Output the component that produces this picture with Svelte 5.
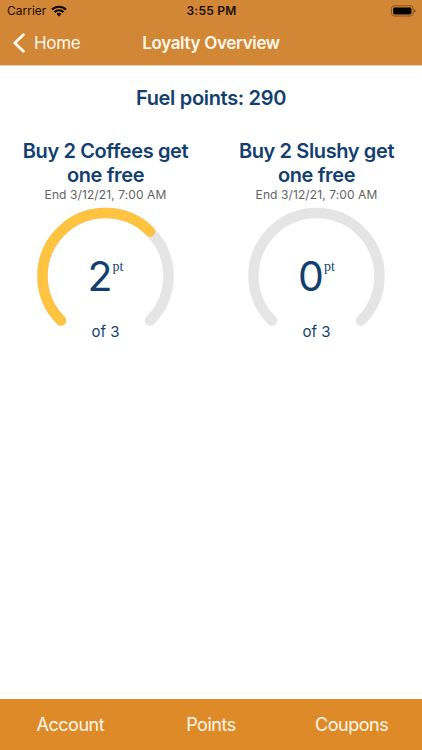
<script lang="ts">
  const fuelPoints = 290

  const offers = [
    { title: ['Buy 2 Coffees get', 'one free'], end: '3/12/21, 7:00 AM', points: 2, goal: 3 },
    { title: ['Buy 2 Slushy get', 'one free'], end: '3/12/21, 7:00 AM', points: 0, goal: 3 },
  ]

  const tabs = ['Account', 'Points', 'Coupons']

  // three quarter ring, starting bottom left
  const arc = 'M24.95 114.55 A63 63 0 1 1 114.05 114.55'
</script>

<div class="screen">
  <header>
    <div class="status">
      <div class="carrier">
        <span>Carrier</span>
        <svg width="16" height="12" viewBox="0 0 16 12">
          <path d="M1 4.6 A10 10 0 0 1 15 4.6" />
          <path d="M3.5 7.1 A6.4 6.4 0 0 1 12.5 7.1" />
          <path class="dot" d="M8 11.4 L5.6 9 A3.4 3.4 0 0 1 10.4 9 Z" />
        </svg>
      </div>
      <div class="time">3:55 PM</div>
      <svg class="battery" width="25" height="12" viewBox="0 0 25 12">
        <rect class="case" x="0.5" y="0.8" width="21.6" height="10.2" rx="2.6" />
        <rect x="2.2" y="2.4" width="18.2" height="7" rx="1.3" />
        <path class="cap" d="M23.2 4.2 Q24.6 4.7 24.6 5.9 Q24.6 7.1 23.2 7.6 Z" />
      </svg>
    </div>
    <nav>
      <button class="back">
        <svg width="14" height="20" viewBox="0 0 14 20">
          <path d="M11.4 1.8 L2.8 10 L11.4 18.2" />
        </svg>
        <span>Home</span>
      </button>
      <h1>Loyalty Overview</h1>
    </nav>
  </header>

  <main>
    <h2>Fuel points: {fuelPoints}</h2>

    <div class="offers">
      {#each offers as offer}
        <section>
          <h3>{offer.title[0]}<br />{offer.title[1]}</h3>
          <p class="end">End {offer.end}</p>
          <div class="gauge">
            <svg width="139" height="140" viewBox="0 0 139 140">
              <path class="track" d={arc} />
              {#if offer.points > 0}
                <path class="fill" d={arc} pathLength={offer.goal} stroke-dasharray="{offer.points} {offer.goal * 2}" />
              {/if}
            </svg>
            <div class="value">
              <span class="num">{offer.points}</span><span class="unit">pt</span>
            </div>
            <div class="goal">of {offer.goal}</div>
          </div>
        </section>
      {/each}
    </div>
  </main>

  <footer>
    {#each tabs as tab}
      <button>{tab}</button>
    {/each}
  </footer>
</div>

<style>
  :global(body) {
    background: #fff;
  }

  .screen {
    --navy: #123f70;

    font-family: Inter, 'Liberation Sans', sans-serif;
    height: 750px;
    display: flex;
    flex-direction: column;
    color: var(--navy);
    background: #fff;
  }

  h1, h2, h3, p {
    margin: 0;
  }

  button {
    border: none;
    background: none;
    padding: 0;
    font: inherit;
    color: #fff8ea;
    cursor: pointer;
  }

  header {
    height: 66px;
    background: #d18736;
    border-bottom: 1px solid #efcfa9;
    box-sizing: border-box;
  }

  .status {
    height: 21px;
    display: grid;
    grid-template-columns: 1fr auto 1fr;
    align-items: center;
    padding: 0 6px 0 7px;
    color: #1c0d02;
    font-size: 12px;
  }

  .carrier {
    display: flex;
    align-items: center;
    gap: 5px;
  }
  .carrier path {
    fill: none;
    stroke: #120800;
    stroke-width: 2.2;
  }
  .carrier .dot {
    fill: #120800;
    stroke: none;
  }

  .time {
    font-weight: 600;
    letter-spacing: 0.25px;
  }

  .battery {
    justify-self: end;
  }
  .battery .case {
    fill: none;
    stroke: #86561f;
  }
  .battery .cap {
    fill: #75481a;
  }

  nav {
    height: 44px;
    display: grid;
    grid-template-columns: 1fr auto 1fr;
    align-items: center;
    padding: 0 12px;
  }

  .back {
    display: flex;
    align-items: center;
    gap: 8px;
    font-size: 17px;
    line-height: 22px;
    letter-spacing: -0.3px;
  }
  .back path {
    fill: none;
    stroke: #fffaf0;
    stroke-width: 2.8;
    stroke-linecap: round;
    stroke-linejoin: round;
  }

  h1 {
    font-size: 17px;
    font-weight: 600;
    line-height: 22px;
    letter-spacing: -0.33px;
    color: #fff8ea;
  }

  main {
    flex: 1;
    padding-top: 20px;
  }

  h2 {
    font-size: 20px;
    font-weight: 600;
    line-height: 24px;
    letter-spacing: -0.32px;
    text-align: center;
  }

  .offers {
    display: grid;
    grid-template-columns: 1fr 1fr;
    margin-top: 29px;
  }

  section {
    text-align: center;
  }

  h3 {
    font-size: 20px;
    font-weight: 600;
    line-height: 24px;
    letter-spacing: -0.38px;
  }

  .end {
    font-size: 12px;
    line-height: 16px;
    letter-spacing: 0.1px;
    color: #636363;
  }

  .gauge {
    display: grid;
    justify-items: center;
    padding-top: 3px;
  }
  .gauge > * {
    grid-area: 1 / 1;
  }

  .track, .fill {
    fill: none;
    stroke: #e5e5e5;
    stroke-width: 10.5;
    stroke-linecap: round;
  }
  .fill {
    stroke: #ffc342;
  }

  .value {
    display: flex;
    align-items: flex-start;
    margin-top: 45px;
    line-height: 50px;
  }

  .num {
    font-size: 41px;
  }

  .unit {
    font-family: 'Liberation Serif', serif;
    font-size: 14px;
    line-height: 16px;
    margin-top: 8px;
  }

  .goal {
    font-size: 15px;
    line-height: 18px;
    margin-top: 117px;
  }

  footer {
    height: 51px;
    display: grid;
    grid-template-columns: repeat(3, 1fr);
    background: #df8a29;
    font-size: 18px;
  }
  footer button {
    letter-spacing: -0.45px;
  }
</style>
